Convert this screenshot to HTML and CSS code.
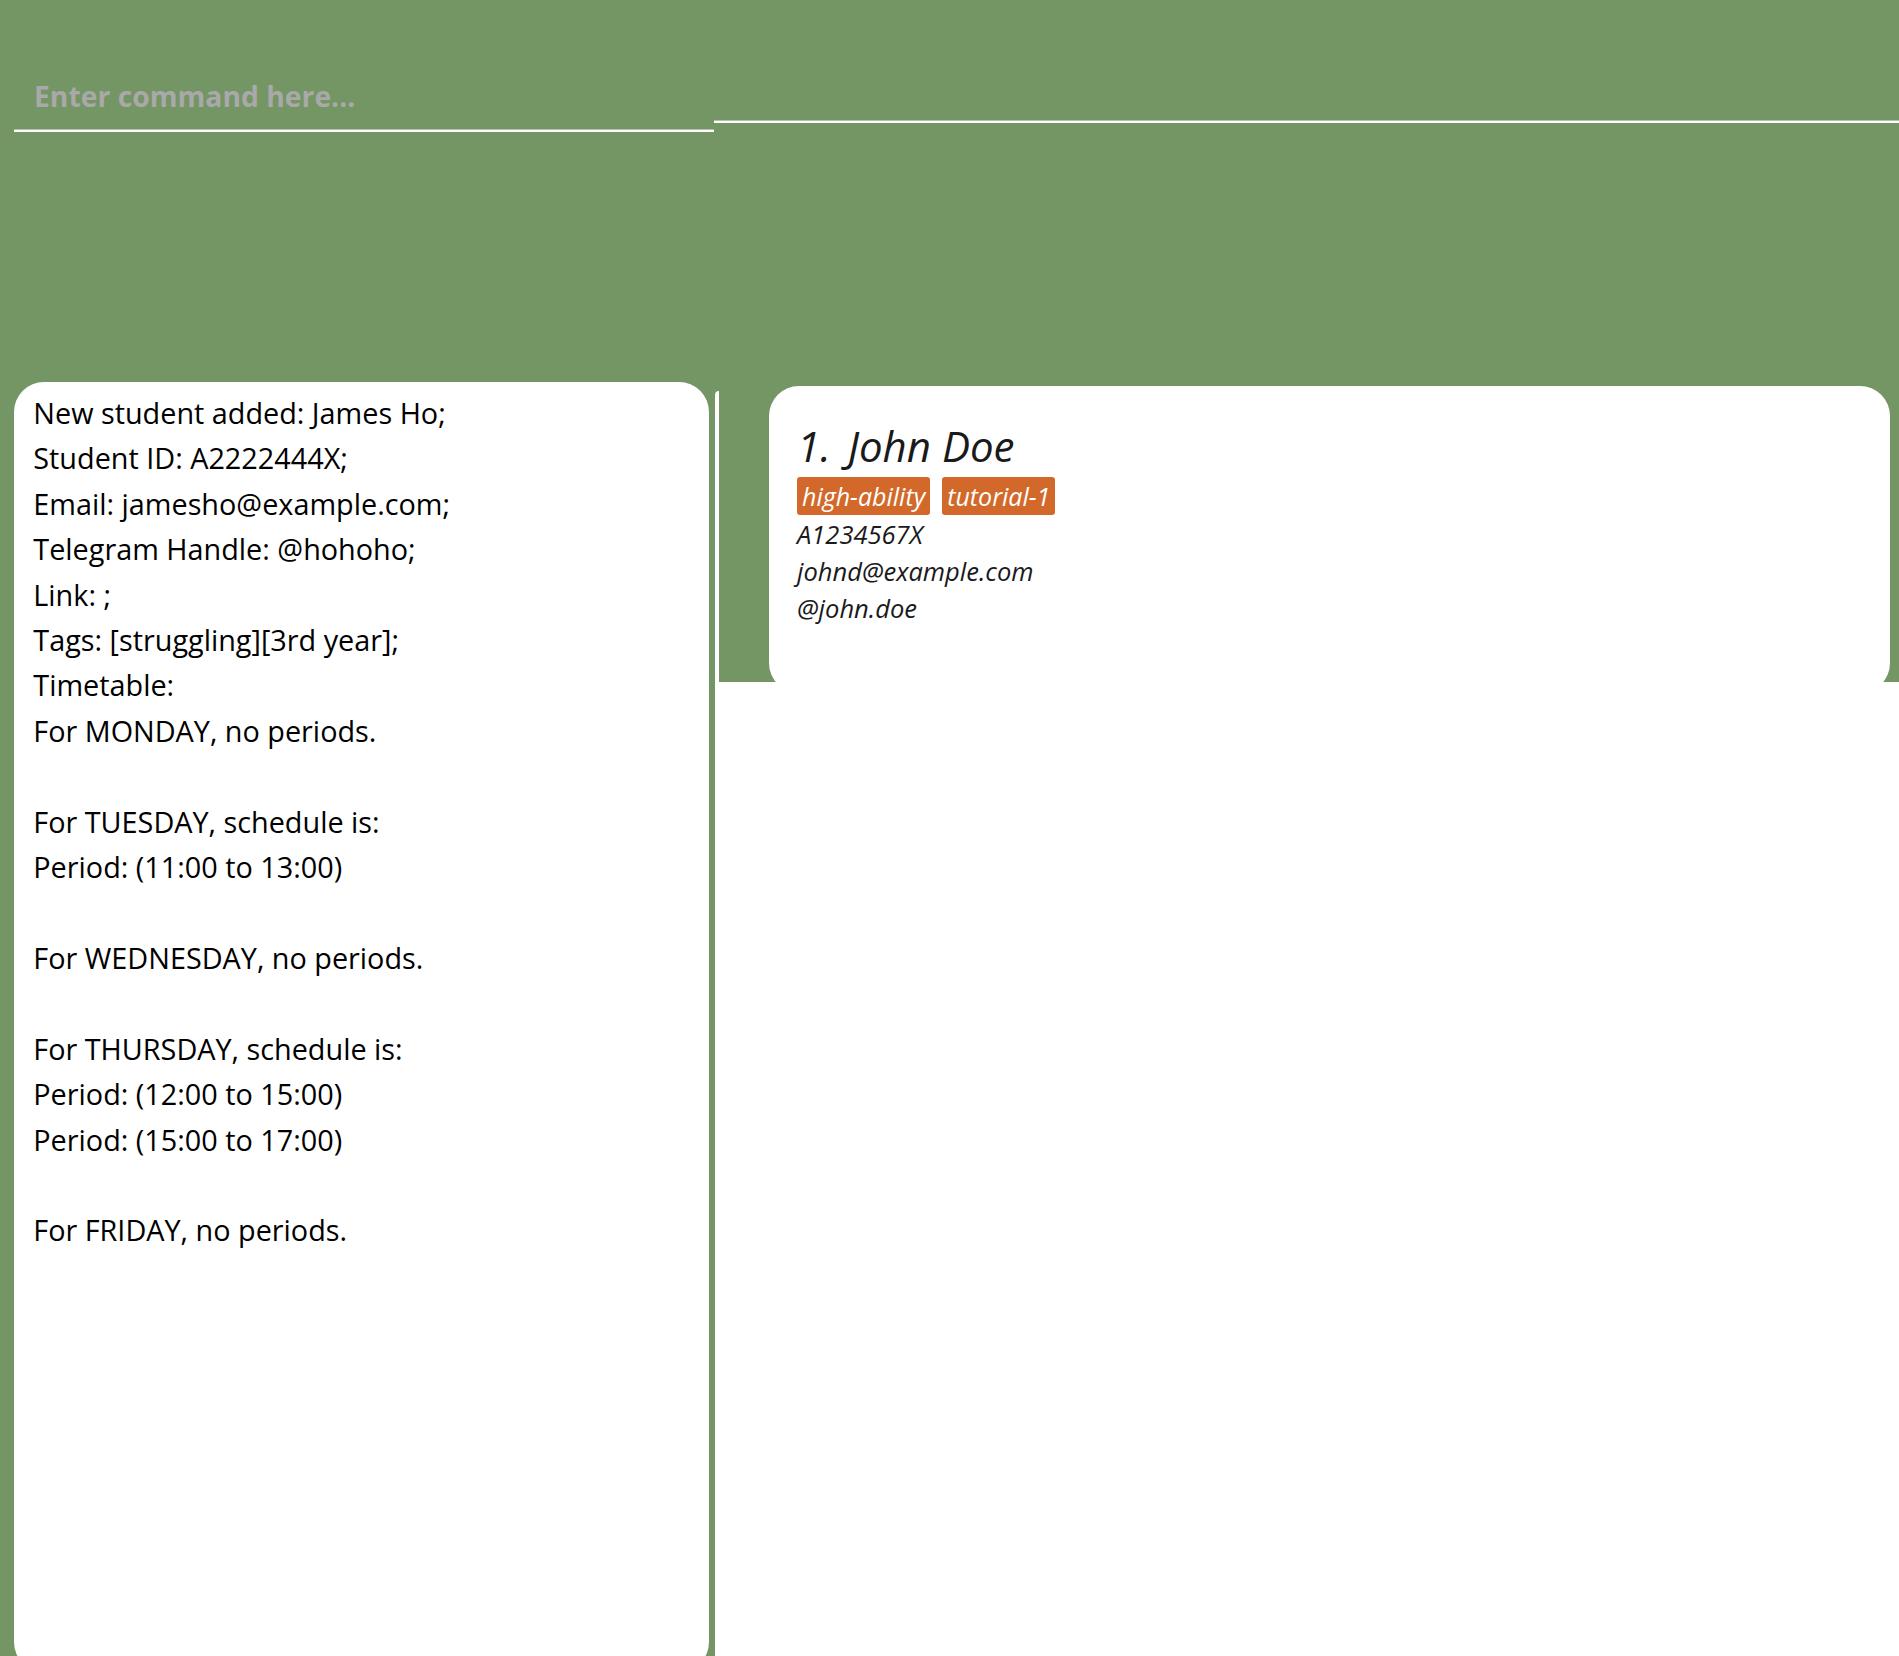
FILE: index.html
```html
<!DOCTYPE html>
<html lang="en">
<head>
<meta charset="utf-8">
<title>Student Book</title>
<link rel="stylesheet" href="styles.css">
</head>
<body>
<div class="top-row">
  <div class="command-box"><span class="placeholder">Enter command here...</span></div>
  <div class="result-bar"></div>
</div>
<div class="main">
  <section class="result-panel">
    <div class="result-text">New student added: James Ho;
Student ID: A2222444X;
Email: jamesho@example.com;
Telegram Handle: @hohoho;
Link: ;
Tags: [struggling][3rd year];
Timetable:
For MONDAY, no periods.

For TUESDAY, schedule is:
Period: (11:00 to 13:00)

For WEDNESDAY, no periods.

For THURSDAY, schedule is:
Period: (12:00 to 15:00)
Period: (15:00 to 17:00)

For FRIDAY, no periods.</div>
  </section>
  <section class="list-column">
    <div class="list-area">
      <article class="card">
        <div class="card-name"><span class="card-index">1.</span><span>John Doe</span></div>
        <div class="tags"><span class="tag">high-ability</span><span class="tag">tutorial-1</span></div>
        <div class="card-line">A1234567X</div>
        <div class="card-line">johnd@example.com</div>
        <div class="card-line">@john.doe</div>
      </article>
    </div>
  </section>
</div>
</body>
</html>
```
FILE: styles.css
```css
html, body {
  margin: 0;
  padding: 0;
  height: 1656px;
  overflow: hidden;
}
body {
  background: #749564;
  font-family: "Open Sans", "Liberation Sans", sans-serif;
}
.top-row {
  display: flex;
  align-items: flex-start;
  padding-left: 14px;
}
.command-box {
  width: 680px;
  padding: 76px 0 0 20px;
  height: 54px;
  border-bottom: 2px solid #ffffff;
  box-shadow: inset 0 -1px 0 rgba(255, 255, 255, 0.45);
}
.placeholder {
  display: block;
  font-size: 28.3px;
  line-height: 40px;
  font-weight: 700;
  color: #a9a9a9;
}
.result-bar {
  flex: 1;
  height: 121px;
  border-bottom: 2px solid #ffffff;
  box-shadow: inset 0 -1px 0 rgba(255, 255, 255, 0.45);
}
.main {
  display: flex;
  align-items: flex-start;
  margin-top: 250px;
  gap: 6px;
  padding-left: 14px;
}
.result-panel {
  width: 695px;
  height: 1290px;
  background: #ffffff;
  border-radius: 30px;
  box-sizing: border-box;
  padding: 8px 18px 8px 19.3px;
}
.result-text {
  white-space: pre-line;
  font-size: 28.8px;
  line-height: 45.4px;
  color: #000000;
}
.list-column {
  flex: 1;
  margin-top: 9px;
  height: 1300px;
  background: #ffffff;
  border-top-left-radius: 4px;
}
.list-area {
  margin-left: 4px;
  height: 291px;
  background: #749564;
  padding-left: 50px;
}
.card {
  position: relative;
  top: -5px;
  width: 1121px;
  height: 307px;
  box-sizing: border-box;
  background: #ffffff;
  border-radius: 30px;
  padding: 35px 0 0 28px;
  font-style: italic;
  color: #1a1a1a;
}
.card-name {
  font-size: 42px;
  line-height: 50px;
  display: flex;
  gap: 17px;
}
.tags {
  display: flex;
  gap: 12px;
  margin-top: 6px;
}
.tag {
  background: #d2692a;
  color: #ffffff;
  font-size: 25px;
  line-height: 30px;
  padding: 4px 5px;
  border-radius: 3px;
}
.card-line {
  font-size: 25.5px;
  line-height: 37.2px;
}
.tags + .card-line {
  margin-top: 1px;
}
```
